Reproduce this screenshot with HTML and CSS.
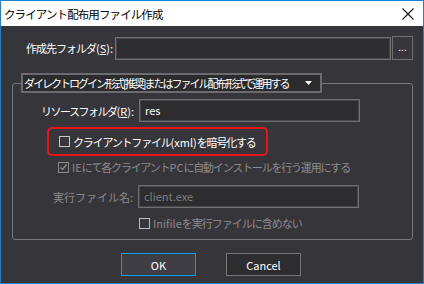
FILE: index.html
```html
<!DOCTYPE html>
<html>
<head>
  <title>クライアント配布用ファイル作成</title>
  <link rel="stylesheet" href="styles.css">
</head>
<body>

  <div class="window">
    <div class="titlebar">
      <span class="title">クライアント配布用ファイル作成</span>
      <svg class="close" width="12" height="12" viewBox="0 0 12 12">
        <path d="M0.5 0.5 L11.5 11.5 M11.5 0.5 L0.5 11.5" stroke="#111" stroke-width="1.1" fill="none" />
      </svg>
    </div>

    <div class="content">
      <div class="dest-row">
        <label class="dest-label">作成先フォルダ<span class="latin">(<u>S</u>):</span></label>
        <div class="field dest-field"></div>
        <div class="browse">...</div>
      </div>

      <fieldset class="group">
        <legend class="combo">
          <span class="combo-text">ダイレクトログイン形式[推奨]またはファイル配布形式で運用する</span>
          <svg width="7" height="4" viewBox="0 0 7 4"><path d="M0 0 H7 L3.5 4 Z" fill="#fff" /></svg>
        </legend>

        <div class="form-row res-row">
          <label class="row-label">リソースフォルダ<span class="latin">(<u>R</u>):</span></label>
          <div class="field">res</div>
        </div>

        <div class="highlight">
          <div class="check">
            <span class="box"></span>
            <span>クライアントファイル<span class="latin">(xml)</span>を暗号化する</span>
          </div>
        </div>

        <div class="check disabled ie-check">
          <span class="box">
            <svg width="9" height="9" viewBox="0 0 9 9"><path d="M1.5 4.5 L3.5 6.5 L7.5 1.5" stroke="#8c8c8c" stroke-width="1.4" fill="none" /></svg>
          </span>
          <span><span class="latin">IE</span>にて各クライアント<span class="latin">PC</span>に自動インストールを行う運用にする</span>
        </div>

        <div class="form-row exe-row disabled">
          <label class="row-label">実行ファイル名:</label>
          <div class="field">client.exe</div>
        </div>

        <div class="check disabled ini-check">
          <span class="box light"></span>
          <span><span class="latin">Inifile</span>を実行ファイルに含めない</span>
        </div>
      </fieldset>

      <div class="buttons">
        <button class="btn ok">OK</button>
        <button class="btn">Cancel</button>
      </div>
    </div>
  </div>

</body>
</html>
```

FILE: styles.css
```css
body {
  margin: 0;
  font-family: "Noto Sans CJK JP", "Liberation Sans", sans-serif;
  font-size: 11px;
  line-height: 14px;
}

.window {
  width: 424px;
  height: 284px;
  box-sizing: border-box;
  border: 1px solid #1a83d8;
  display: flex;
  flex-direction: column;
  background-color: #36353a;
}

.titlebar {
  height: 25px;
  flex-shrink: 0;
  background-color: #fff;
  display: flex;
  align-items: center;
  justify-content: space-between;
  padding: 0 9px 0 3px;
}

.title {
  color: #000;
  font-size: 11.5px;
  letter-spacing: -0.9px;
  white-space: nowrap;
}

.content {
  flex: 1;
  color: #fff;
}

.latin {
  letter-spacing: 0;
}

.dest-row {
  display: flex;
  align-items: center;
  margin: 10px 0 0 25px;
  height: 24px;
}

.dest-label {
  width: 89px;
  letter-spacing: -1px;
  white-space: nowrap;
}

.field {
  box-sizing: border-box;
  height: 23px;
  border: 1px solid #6f6f6f;
  box-shadow: inset 0 0 0 1px #48474c;
  background-color: #2d2d30;
  padding: 3px 0 0 5px;
  line-height: 14px;
  color: #fff;
}

.dest-field {
  width: 276px;
}

.browse {
  box-sizing: border-box;
  width: 21px;
  height: 24px;
  margin-left: 1px;
  border: 1px solid #6f6f6f;
  text-align: center;
  line-height: 20px;
  font-size: 10px;
}

.group {
  margin: 13px 10px 0 11px;
  padding: 0 8px 9px 8px;
  border: 1px solid #77777a;
  border-radius: 3px;
}

.combo {
  box-sizing: border-box;
  width: 301px;
  height: 20px;
  padding: 0 8px 0 1px;
  border: 2px solid #6c6c6e;
  background-color: #2b2b2e;
  display: flex;
  align-items: center;
  justify-content: space-between;
  white-space: nowrap;
}

.combo-text {
  letter-spacing: -2px;
}

.form-row {
  display: flex;
  align-items: center;
}

.res-row {
  margin-top: 6px;
}

.row-label {
  width: 113px;
  text-align: right;
  padding-right: 5px;
  letter-spacing: -1.5px;
  white-space: nowrap;
}

.form-row .field {
  width: 221px;
}

.highlight {
  box-sizing: border-box;
  width: 221px;
  height: 29px;
  margin: 5px 0 0 26px;
  border: 2px solid #e8141a;
  border-radius: 5px;
  display: flex;
  align-items: center;
  padding-left: 10px;
}

.check {
  display: flex;
  align-items: center;
  height: 14px;
  letter-spacing: -1.2px;
  white-space: nowrap;
}

.box {
  box-sizing: border-box;
  width: 11px;
  height: 11px;
  border: 1px solid #c8c8c8;
  margin-right: 3px;
  display: flex;
  align-items: center;
  justify-content: center;
  flex-shrink: 0;
}

.box.light {
  border-color: #bdbdbd;
}

.disabled {
  color: #8c8c8c;
}

.disabled .field {
  color: #7c7c7c;
}

.ie-check {
  margin: 4px 0 0 37px;
}

.ie-check .box {
  border-color: #8c8c8c;
}

.exe-row {
  margin-top: 11px;
}

.exe-row .row-label {
  width: 112px;
  letter-spacing: 0;
}

.ini-check {
  margin: 8px 0 0 118px;
  letter-spacing: -1px;
}

.buttons {
  display: flex;
  gap: 30px;
  margin: 13px 0 0 120px;
}

.btn {
  width: 75px;
  height: 23px;
  font-family: "Noto Sans CJK JP", "Liberation Sans", sans-serif;
  font-size: 11px;
  color: #fff;
  background-color: #2d2d30;
  border: 1px solid #77777a;
  padding: 0;
}

.btn.ok {
  background-color: #3f3e44;
  border-color: #0a9bf3;
}
```
